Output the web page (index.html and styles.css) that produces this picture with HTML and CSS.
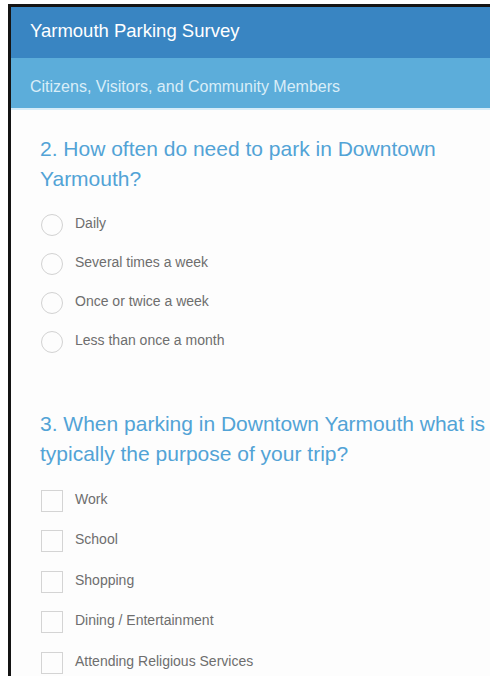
FILE: index.html
```html
<!DOCTYPE html>
<html lang="en">
<head>
<meta charset="utf-8">
<title>Yarmouth Parking Survey</title>
<link rel="stylesheet" href="styles.css">
</head>
<body>
<div class="frame">
  <header class="survey-header">
    <h1 class="survey-title">Yarmouth Parking Survey</h1>
  </header>
  <div class="survey-page-title">Citizens, Visitors, and Community Members</div>
  <main class="survey-body">
    <section class="question">
      <h2 class="question-title">2. How often do need to park in Downtown Yarmouth?</h2>
      <ul class="choices">
        <li class="choice"><span class="radio"></span><span class="choice-label">Daily</span></li>
        <li class="choice"><span class="radio"></span><span class="choice-label">Several times a week</span></li>
        <li class="choice"><span class="radio"></span><span class="choice-label">Once or twice a week</span></li>
        <li class="choice"><span class="radio"></span><span class="choice-label">Less than once a month</span></li>
      </ul>
    </section>
    <section class="question question-multi">
      <h2 class="question-title">3. When parking in Downtown Yarmouth what is typically the purpose of your trip?</h2>
      <ul class="choices choices-check">
        <li class="choice"><span class="checkbox"></span><span class="choice-label">Work</span></li>
        <li class="choice"><span class="checkbox"></span><span class="choice-label">School</span></li>
        <li class="choice"><span class="checkbox"></span><span class="choice-label">Shopping</span></li>
        <li class="choice"><span class="checkbox"></span><span class="choice-label">Dining / Entertainment</span></li>
        <li class="choice"><span class="checkbox"></span><span class="choice-label">Attending Religious Services</span></li>
      </ul>
    </section>
  </main>
</div>
</body>
</html>
```
FILE: styles.css
```css
html, body {
  margin: 0;
  padding: 0;
  background: #ffffff;
  overflow: hidden;
}

body {
  padding: 4px 0 0 8px;
  font-family: "Liberation Sans", Arial, Helvetica, sans-serif;
}

.frame {
  border-left: 3px solid #141414;
  border-top: 3px solid #141414;
  min-height: 700px;
  background: #fdfdfd;
}

.survey-header {
  background: #3985c2;
  height: 51px;
  display: flex;
  align-items: center;
  padding-left: 19px;
}

.survey-title {
  margin: 0;
  font-size: 18.5px;
  font-weight: normal;
  color: #ffffff;
  padding-bottom: 4px;
}

.survey-page-title {
  background: #5cadda;
  height: 52px;
  display: flex;
  align-items: center;
  padding: 8px 0 0 19px;
  font-size: 16px;
  color: #d9edf8;
  border-bottom: 2px solid #d6ecf8;
  box-sizing: border-box;
}

.survey-body {
  padding: 24px 0 0 29px;
}

.question-title {
  margin: 0;
  font-size: 21px;
  line-height: 30px;
  font-weight: normal;
  color: #52a3d6;
}

.choices {
  list-style: none;
  margin: 11px 0 0 0;
  padding: 0;
}

.choice {
  display: flex;
  align-items: center;
  height: 39px;
  font-size: 14px;
  color: #6e6e6e;
}

.choices-check .choice {
  height: 40.5px;
}

.radio {
  width: 22px;
  height: 22px;
  border: 1px solid #d2d2d2;
  border-radius: 50%;
  box-sizing: border-box;
  flex: 0 0 auto;
  margin-left: 1px;
}

.checkbox {
  width: 22px;
  height: 22px;
  border: 1px solid #d4d4d4;
  box-sizing: border-box;
  flex: 0 0 auto;
  margin-left: 1px;
}

.choice-label {
  margin-left: 12px;
  padding-bottom: 4px;
}

.question-multi {
  margin-top: 48px;
}

.choices-check {
  margin-top: 11.5px;
}
```
